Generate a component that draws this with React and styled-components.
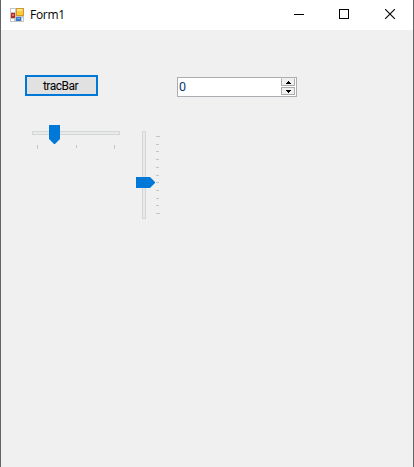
import React from "react";
import styled, { createGlobalStyle } from "styled-components";

const GlobalStyle = createGlobalStyle`
  * { box-sizing: border-box; }
  body { margin: 0; background: #f0f0f0; overflow: hidden; }
`;

const Window = styled.main`
  display: flex;
  flex-direction: column;
  width: 414px;
  height: 467px;
  background: #f0f0f0;
  border: solid #646464;
  border-width: 0 1px;
  font-family: "Open Sans", "Noto Sans", sans-serif;
  color: #000;
`;

const TitleBar = styled.header`
  display: flex;
  align-items: center;
  flex: 0 0 30px;
  background: #fff;
  padding-left: 9px;
`;

const Title = styled.h1`
  flex: 1;
  margin: 0 0 0 6px;
  font-size: 12px;
  line-height: 16px;
  font-weight: 400;
  letter-spacing: -0.3px;
`;

const CaptionButton = styled.button`
  display: flex;
  align-items: center;
  justify-content: center;
  width: ${(p) => p.$width}px;
  height: 30px;
  padding: 0 0 2px;
  border: 0;
  background: transparent;
`;

const Glyph = styled.svg`
  display: block;
  flex: none;
`;

const Client = styled.section`
  padding: 45px 0 0 24px;
`;

const InputRow = styled.div`
  display: flex;
  align-items: flex-start;
  gap: 79px;
`;

const PushButton = styled.button`
  width: 73px;
  height: 21px;
  padding: 0 2px 0 0;
  border: 2px solid #0078d7;
  border-radius: 0;
  background: #e1e1e1;
  color: #000;
  font: 12px/16px Roboto, "Liberation Sans", sans-serif;
  letter-spacing: -0.5px;
  white-space: nowrap;
`;

const NumberBox = styled.div`
  display: flex;
  justify-content: space-between;
  width: 120px;
  height: 20px;
  margin-top: 2px;
  padding: 0 1px 1px 1px;
  background: #fff;
  border: 1px solid #abadb3;
`;

const NumberValue = styled.span`
  font: 12.5px/17px Roboto, "Liberation Sans", sans-serif;
  color: #0a3a70;
`;

const Spinner = styled.div`
  display: flex;
  flex-direction: column;
  width: 14px;
  gap: 1px;
`;

const SpinButton = styled.button`
  display: flex;
  align-items: center;
  justify-content: center;
  height: 8px;
  padding: 0;
  border: 1px solid #acacac;
  border-top-color: ${(p) => (p.$up ? "#f0f0f0" : "#acacac")};
  border-radius: 0;
  background: #f0f0f0;
`;

const SliderRow = styled.div`
  display: flex;
  align-items: flex-start;
  gap: 16px;
  padding: 28px 0 0 7px;
`;

const VerticalSlot = styled.div`
  padding-top: 6px;
`;

const horizontalTicks = [[5, 4], [44, 3], [82, 4]];
const verticalTicks = [5, 13, 20, 28, 36, 44, 51, 59, 67, 74, 82];

function FormIcon() {
  return (
    <Glyph width="14" height="14" viewBox="0 0 14 14" shapeRendering="crispEdges">
      <path fill="#c6c6c6" d="M0 0h14v14H0z" />
      <path fill="#fff" d="M1 1h4v3H1zM1 11h3v2H1zM12 10h1v3h-1z" />
      <path fill="#d09a28" d="M6 0h8v8H6z" />
      <path fill="#ffc83d" d="M7 1h6v6H7z" />
      <path fill="#ffe394" d="M7 1h5v2H7z" />
      <path fill="#b72a1a" d="M1 5h4v5H1z" />
      <path fill="#e7715f" d="M2 6h2v2H2z" />
      <path fill="#3879d0" d="M6 9h5v4H6z" />
      <path fill="#7eb2f2" d="M7 10h3v1H7z" />
    </Glyph>
  );
}

function HorizontalTrackBar() {
  return (
    <Glyph width="88" height="25" viewBox="0 0 88 25" role="slider" aria-label="Horizontal">
      <rect x=".5" y="6.5" width="87" height="3" fill="#e7eaea" stroke="#d6d6d6" />
      {horizontalTicks.map(([x, h]) => (
        <rect key={x} x={x} y="20" width="1" height={h} fill="#c4c4c4" />
      ))}
      <path fill="#0078d7" d="M17 0h11v14l-5 5h-1l-5-5z" />
    </Glyph>
  );
}

function VerticalTrackBar() {
  return (
    <Glyph width="24" height="88" viewBox="0 0 24 88" role="slider" aria-label="Vertical">
      <rect x="6.5" y=".5" width="3" height="87" fill="#e7eaea" stroke="#d6d6d6" />
      {verticalTicks.map((y) => (
        <rect key={y} x="20" y={y} width={y === 5 || y === 82 ? 4 : 3} height="1" fill="#c4c4c4" />
      ))}
      <path fill="#0078d7" d="M0 46h14l5 5v1l-5 5H0z" />
    </Glyph>
  );
}

export default function App() {
  return (
    <>
      <GlobalStyle />
      <Window>
        <TitleBar>
          <FormIcon />
          <Title>Form1</Title>
          <CaptionButton $width={46} aria-label="Minimize">
            <Glyph width="10" height="10" shapeRendering="crispEdges">
              <path d="M0 5h10v1H0z" />
            </Glyph>
          </CaptionButton>
          <CaptionButton $width={44} aria-label="Maximize">
            <Glyph width="10" height="10">
              <rect x=".5" y=".5" width="9" height="9" fill="none" stroke="#000" />
            </Glyph>
          </CaptionButton>
          <CaptionButton $width={47} aria-label="Close">
            <Glyph width="10" height="10">
              <path d="M0 0l10 10M10 0L0 10" stroke="#000" strokeWidth="1.1" />
            </Glyph>
          </CaptionButton>
        </TitleBar>
        <Client>
          <InputRow>
            <PushButton>tracBar</PushButton>
            <NumberBox>
              <NumberValue>0</NumberValue>
              <Spinner>
                <SpinButton $up aria-label="Increase">
                  <Glyph width="5" height="3" shapeRendering="crispEdges">
                    <path d="M2 0h1v1h1v1h1v1H0V2h1V1h1z" />
                  </Glyph>
                </SpinButton>
                <SpinButton aria-label="Decrease">
                  <Glyph width="5" height="3" shapeRendering="crispEdges">
                    <path d="M0 0h5v1H4v1H3v1H2V2H1V1H0z" />
                  </Glyph>
                </SpinButton>
              </Spinner>
            </NumberBox>
          </InputRow>
          <SliderRow>
            <HorizontalTrackBar />
            <VerticalSlot>
              <VerticalTrackBar />
            </VerticalSlot>
          </SliderRow>
        </Client>
      </Window>
    </>
  );
}
